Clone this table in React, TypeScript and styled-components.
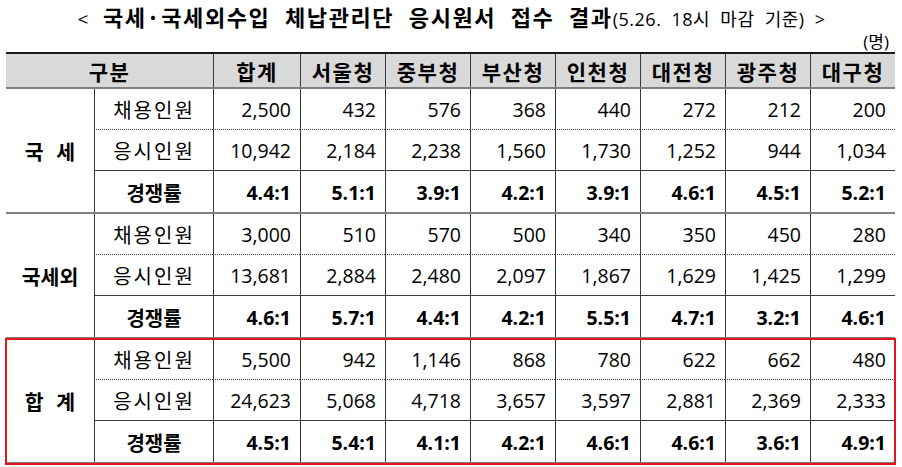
import React from "react";
import styled, { createGlobalStyle, css } from "styled-components";

const GlobalStyle = createGlobalStyle`
  html, body { margin: 0; padding: 0; background: #ffffff; }
  body { font-family: "Open Sans", "Noto Sans CJK KR", sans-serif; color: #000; }
  * { box-sizing: border-box; }
`;

const COLS = "88px 119px 87px repeat(7, 85px)";

const Page = styled.div`
  width: 902px;
  height: 467px;
  padding: 0 7px 0 6px;
  overflow: hidden;
`;

const Title = styled.div`
  height: 32px;
  line-height: 32px;
  text-align: center;
  white-space: nowrap;
  font-family: "Noto Sans CJK KR", sans-serif;
  font-size: 22px;
  font-weight: 700;
  letter-spacing: 1.6px;
  word-spacing: 8px;
  padding-left: 2px;
`;

const Bracket = styled.span`
  font-family: "Open Sans", sans-serif;
  font-weight: 400;
  font-size: 19px;
  letter-spacing: 0;
`;

const TitleNote = styled.span`
  font-family: "Open Sans", "Noto Sans CJK KR", sans-serif;
  font-size: 18px;
  font-weight: 400;
  letter-spacing: 0.5px;
  word-spacing: 5px;
`;

const Unit = styled.div`
  height: 20px;
  line-height: 20px;
  text-align: right;
  padding-right: 6px;
  font-size: 17px;
`;

const HeaderRow = styled.div`
  display: grid;
  grid-template-columns: ${COLS};
  height: 37px;
  background: #d9d9d9;
  border-top: 2px solid #1a1a1a;
  border-bottom: 2px solid #7f7f7f;
`;

const HeadCell = styled.div<{ $span?: number; $first?: boolean }>`
  grid-column: span ${(p) => p.$span ?? 1};
  display: flex;
  align-items: center;
  justify-content: center;
  font-family: "Noto Sans CJK KR", sans-serif;
  font-size: 21px;
  font-weight: 700;
  letter-spacing: 1.5px;
  border-left: ${(p) => (p.$first ? "none" : "1px solid #3a3a3a")};
`;

const Group = styled.div<{ $highlight?: boolean }>`
  display: grid;
  grid-template-columns: ${COLS};
  grid-template-rows: repeat(3, 41px);
  border-bottom: 2px solid #7f7f7f;
  ${(p) =>
    p.$highlight &&
    css`
      position: relative;
      outline: 2px solid #e3141c;
      outline-offset: -1px;
    `}
`;

const GroupLabel = styled.div`
  grid-row: 1 / span 3;
  display: flex;
  align-items: center;
  justify-content: center;
  font-family: "Noto Sans CJK KR", sans-serif;
  font-size: 20.5px;
  font-weight: 700;
  word-spacing: 8px;
`;

type Line = "dotted" | "solid" | "none";

const Cell = styled.div<{ $line: Line; $label?: boolean; $bold?: boolean }>`
  display: flex;
  align-items: center;
  justify-content: ${(p) => (p.$label ? "center" : "flex-end")};
  padding-right: ${(p) => (p.$label ? "0" : "9px")};
  padding-top: 1px;
  border-left: 1px solid #3a3a3a;
  border-bottom: ${(p) =>
    p.$line === "dotted"
      ? "1px dotted #444"
      : p.$line === "solid"
      ? "1px solid #3a3a3a"
      : "none"};
  font-size: ${(p) => (p.$label ? "20px" : "19.5px")};
  font-weight: ${(p) => (p.$bold ? 700 : 400)};
  letter-spacing: ${(p) => (p.$label && !p.$bold ? "2px" : "0")};
  white-space: nowrap;
`;

const offices = ["합계", "서울청", "중부청", "부산청", "인천청", "대전청", "광주청", "대구청"];

type RowData = { label: string; values: string[] };
type GroupData = { name: string; rows: RowData[]; highlight?: boolean };

const groups: GroupData[] = [
  {
    name: "국 세",
    rows: [
      { label: "채용인원", values: ["2,500", "432", "576", "368", "440", "272", "212", "200"] },
      { label: "응시인원", values: ["10,942", "2,184", "2,238", "1,560", "1,730", "1,252", "944", "1,034"] },
      { label: "경쟁률", values: ["4.4:1", "5.1:1", "3.9:1", "4.2:1", "3.9:1", "4.6:1", "4.5:1", "5.2:1"] },
    ],
  },
  {
    name: "국세외",
    rows: [
      { label: "채용인원", values: ["3,000", "510", "570", "500", "340", "350", "450", "280"] },
      { label: "응시인원", values: ["13,681", "2,884", "2,480", "2,097", "1,867", "1,629", "1,425", "1,299"] },
      { label: "경쟁률", values: ["4.6:1", "5.7:1", "4.4:1", "4.2:1", "5.5:1", "4.7:1", "3.2:1", "4.6:1"] },
    ],
  },
  {
    name: "합 계",
    highlight: true,
    rows: [
      { label: "채용인원", values: ["5,500", "942", "1,146", "868", "780", "622", "662", "480"] },
      { label: "응시인원", values: ["24,623", "5,068", "4,718", "3,657", "3,597", "2,881", "2,369", "2,333"] },
      { label: "경쟁률", values: ["4.5:1", "5.4:1", "4.1:1", "4.2:1", "4.6:1", "4.6:1", "3.6:1", "4.9:1"] },
    ],
  },
];

const lines: Line[] = ["dotted", "solid", "none"];

export default function App() {
  return (
    <>
      <GlobalStyle />
      <Page>
        <Title>
          <Bracket>&lt;</Bracket> 국세·국세외수입 체납관리단 응시원서 접수 결과
          <TitleNote>(5.26. 18시 마감 기준) &gt;</TitleNote>
        </Title>
        <Unit>(명)</Unit>
        <HeaderRow>
          <HeadCell $span={2} $first>
            구분
          </HeadCell>
          {offices.map((o) => (
            <HeadCell key={o}>{o}</HeadCell>
          ))}
        </HeaderRow>
        {groups.map((g) => (
          <Group key={g.name} $highlight={g.highlight}>
            <GroupLabel>{g.name}</GroupLabel>
            {g.rows.map((r, ri) => (
              <React.Fragment key={r.label}>
                <Cell $line={lines[ri]} $label $bold={ri === 2}>
                  {r.label}
                </Cell>
                {r.values.map((v, vi) => (
                  <Cell key={vi} $line={lines[ri]} $bold={ri === 2}>
                    {v}
                  </Cell>
                ))}
              </React.Fragment>
            ))}
          </Group>
        ))}
      </Page>
    </>
  );
}
